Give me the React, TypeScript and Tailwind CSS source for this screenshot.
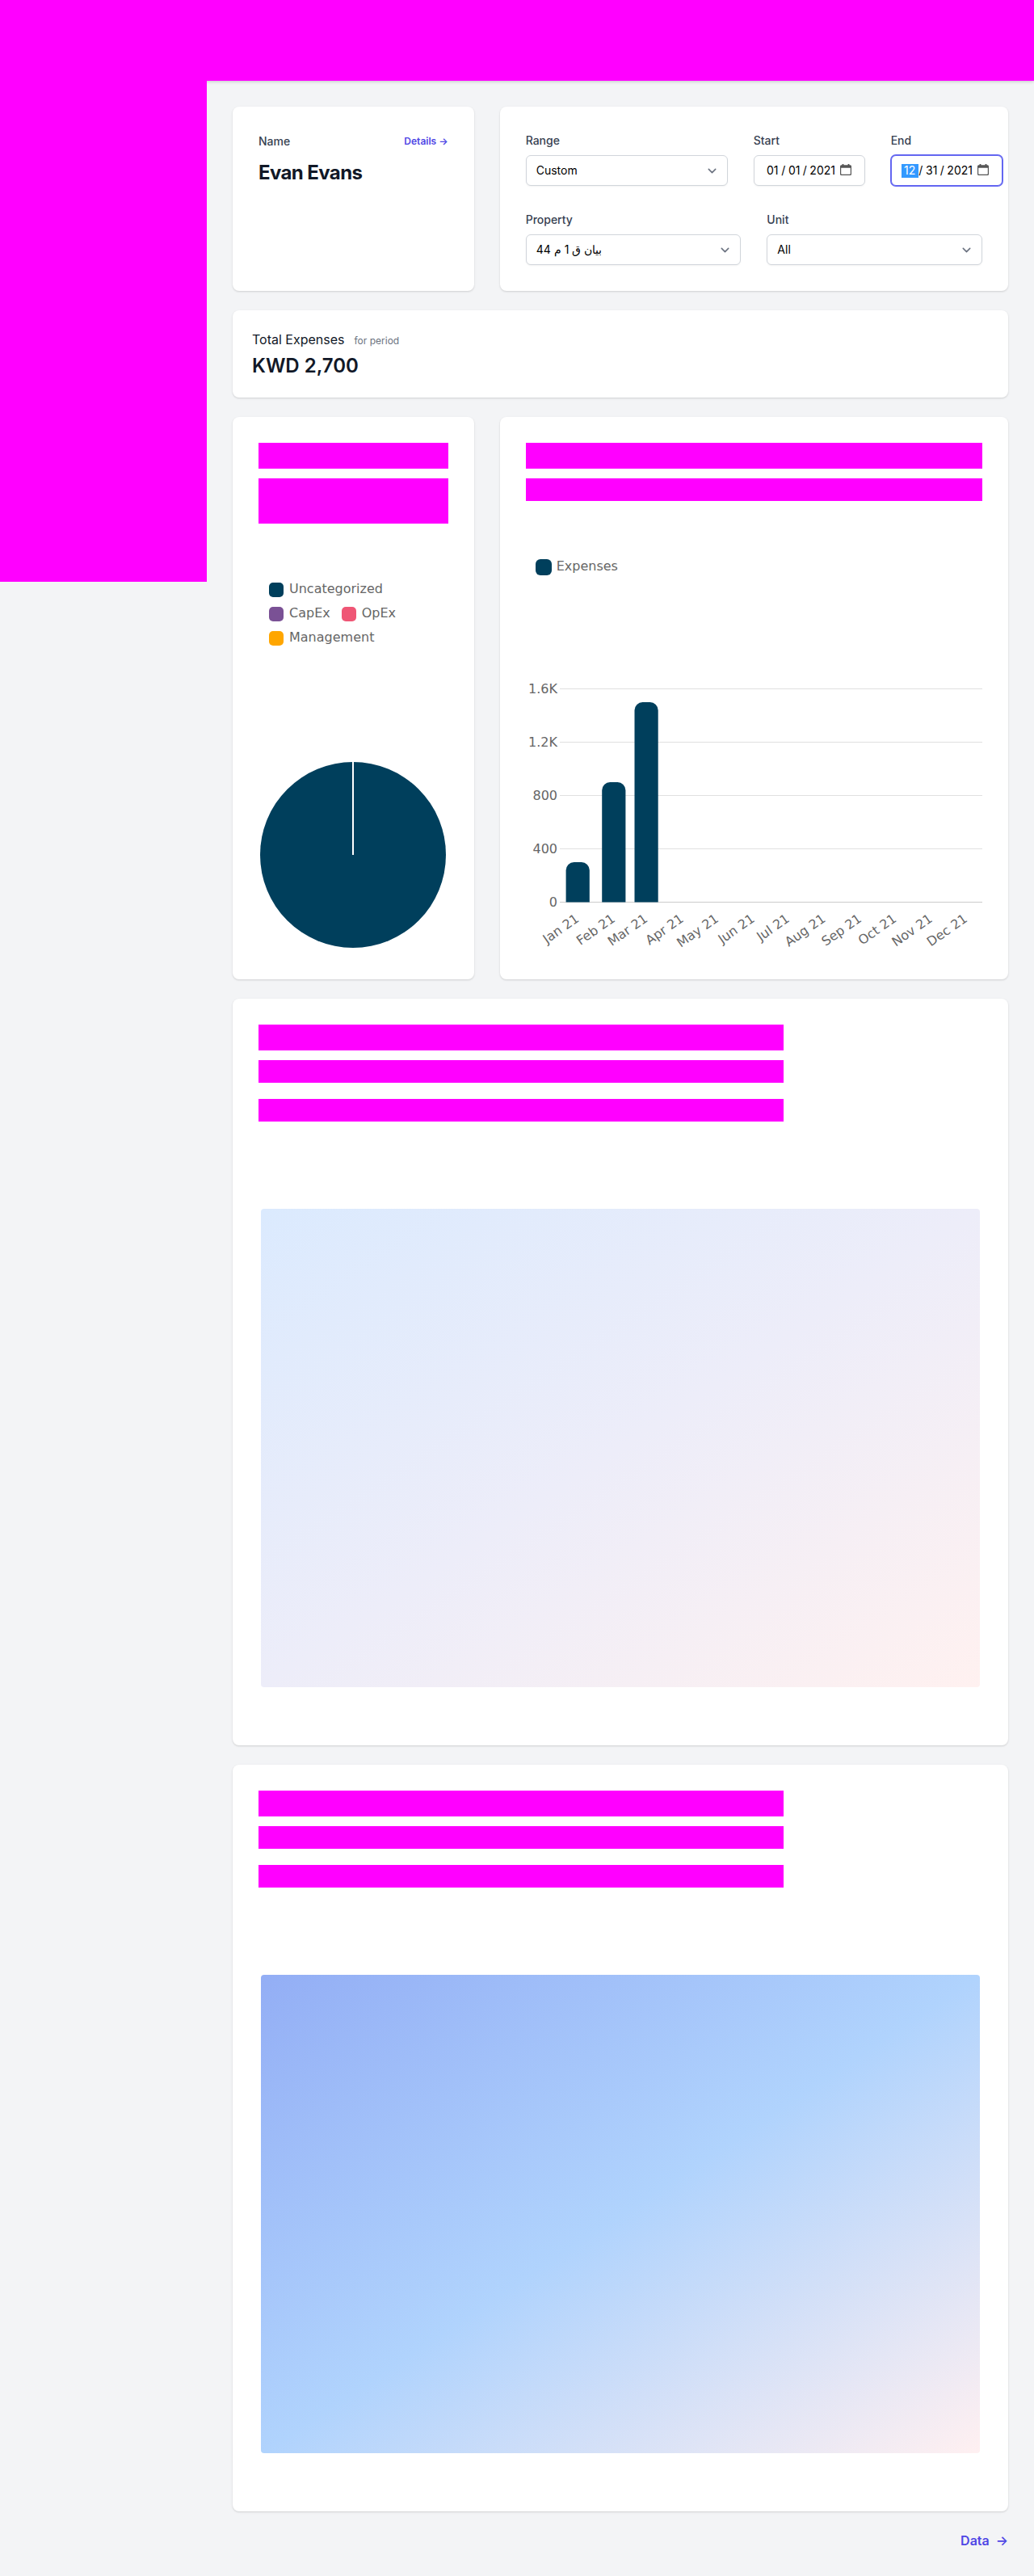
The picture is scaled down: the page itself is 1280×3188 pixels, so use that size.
import React from "react";

const INTER = "font-['Inter',sans-serif]";
const CARD = "rounded-lg bg-white shadow-[0_1px_3px_0_rgba(0,0,0,0.1),0_1px_2px_0_rgba(0,0,0,0.06)]";
const FIELD = "mt-2 flex h-[38px] w-full items-center rounded-md border bg-white pl-3 text-sm leading-5 text-black";
const IDLE = "border-[#d1d5db] shadow-[0_1px_2px_0_rgba(0,0,0,0.05)]";
const FOCUSED = "border-[#6366f1] shadow-[0_0_0_1px_#6366f1]";

function Select({ label, value }: { label: string; value: string }) {
  return (
    <div>
      <div className="text-sm leading-5 font-medium text-[#374151]">{label}</div>
      <button type="button" className={`${FIELD} ${IDLE} justify-between pr-2`}>
        <span>{value}</span>
        <svg width="21" height="21" viewBox="0 0 20 20" fill="none">
          <path d="M6 8l4 4 4-4" stroke="#6b7280" strokeWidth="1.5" strokeLinecap="round" strokeLinejoin="round" />
        </svg>
      </button>
    </div>
  );
}

function DateField({ label, parts, focus }: { label: string; parts: [string, string, string]; focus?: boolean }) {
  return (
    <div>
      <div className="text-sm leading-5 font-medium text-[#374151]">{label}</div>
      <div className={`${FIELD} ${focus ? FOCUSED : IDLE}`}>
        <span className={`mt-px h-[17px] w-[21px] shrink-0 text-center leading-[16px] ${focus ? "bg-[#3399ff] text-white" : ""}`}>
          {parts[0]}
        </span>
        <span className="w-[6px] shrink-0 text-center">/</span>
        <span className="w-[21px] shrink-0 text-center">{parts[1]}</span>
        <span className="w-[5px] shrink-0 text-center">/</span>
        <span className="w-[39px] shrink-0 text-center">{parts[2]}</span>
        <svg width="14" height="14" viewBox="0 0 14 14" className="-mt-[2px] ml-[2px] shrink-0" fill="#555">
          <path d="M2.6 0h1.8v1.2h5.2V0h1.8v1.2h1.1A1.5 1.5 0 0 1 14 2.7v9.8a1.5 1.5 0 0 1-1.5 1.5h-11A1.5 1.5 0 0 1 0 12.5V2.7A1.5 1.5 0 0 1 1.5 1.2h1.1zM1.2 4.7v7.4a.7.7 0 0 0 .7.7h10.2a.7.7 0 0 0 .7-.7V4.7z" fillRule="evenodd" />
        </svg>
      </div>
    </div>
  );
}

function Legend({ color, label }: { color: string; label: string }) {
  return (
    <div className="flex h-[21px] items-center gap-[7px]">
      <span className="size-[18px] rounded-[5px]" style={{ background: color }} />
      <span className="-mt-[3px] text-[16px] leading-[21px] text-[#666]">{label}</span>
    </div>
  );
}

const MONTHS: [string, number, number][] = [
  ["Jan 21", 0, 300],
  ["Feb 21", 31, 900],
  ["Mar 21", 59, 1500],
  ["Apr 21", 90, 0],
  ["May 21", 120, 0],
  ["Jun 21", 151, 0],
  ["Jul 21", 181, 0],
  ["Aug 21", 212, 0],
  ["Sep 21", 243, 0],
  ["Oct 21", 273, 0],
  ["Nov 21", 304, 0],
  ["Dec 21", 334, 0],
];

function BarChart() {
  const base = 276.5;
  return (
    <svg width="565" height="340" viewBox="0 0 565 340" className="block font-['DejaVu_Sans',sans-serif] text-[16px]">
      {["0", "400", "800", "1.2K", "1.6K"].map((t, i) => (
        <g key={t}>
          <line x1="42" x2="565" y1={base - i * 66} y2={base - i * 66} stroke={i ? "#e0e0e0" : "#ccc"} />
          <text x="39" y={base - i * 66 + 5} textAnchor="end" fill="#666">{t}</text>
        </g>
      ))}
      {MONTHS.map(([name, day, value]) => {
        const x = 64.2 + day * 1.439;
        const top = base - value * 0.165;
        return (
          <g key={name}>
            {value > 0 && (
              <path
                d={`M${x - 14.6} ${base}V${top + 10}a10 10 0 0 1 10-10h9.2a10 10 0 0 1 10 10V${base}z`}
                fill="#003f5c"
              />
            )}
            <text transform={`translate(${x - 0.7} ${base + 18}) rotate(-35)`} y="6" textAnchor="end" fill="#666">{name}</text>
          </g>
        );
      })}
    </svg>
  );
}

function MapCard({ gradient }: { gradient: string }) {
  return (
    <section className={`${CARD} h-[924px] p-8`}>
      <div className="h-8 w-[650px] bg-[#ff00ff]" />
      <div className="mt-3 h-7 w-[650px] bg-[#ff00ff]" />
      <div className="mt-5 h-7 w-[650px] bg-[#ff00ff]" />
      <div className={`mt-[108px] mr-[3px] ml-[3px] h-[592px] rounded ${gradient}`} />
    </section>
  );
}

export default function App() {
  return (
    <div className={`h-[3188px] w-[1280px] bg-[#f3f4f6] ${INTER}`}>
      <header className="h-[100px] bg-[#ff00ff] shadow-[0_1px_4px_rgba(0,0,0,0.2)]" />
      <div className="flex items-start">
        <aside className="relative h-[620px] w-64 shrink-0 bg-[#ff00ff]" />
        <main className="flex w-[1024px] flex-col gap-6 px-8 pt-8">
          <div className="grid grid-cols-3 gap-8">
            <section className={`${CARD} px-8 pt-[31px]`}>
              <div className="flex items-center justify-between text-[#374151]">
                <span className="text-sm leading-6 font-medium">Name</span>
                <a className="text-xs font-semibold text-[#4f46e5]">Details →</a>
              </div>
              <h1 className="mt-[9px] text-2xl leading-9 font-bold tracking-tight text-[#111827]">Evan Evans</h1>
            </section>
            <section className={`${CARD} col-span-2 flex h-[228px] flex-col gap-8 p-8`}>
              <div className="grid w-[590px] grid-cols-[250px_138px_138px] gap-x-8">
                <Select label="Range" value="Custom" />
                <DateField label="Start" parts={["01", "01", "2021"]} />
                <DateField label="End" parts={["12", "31", "2021"]} focus />
              </div>
              <div className="grid grid-cols-2 gap-8">
                <Select label="Property" value="44 بيان ق 1 م" />
                <Select label="Unit" value="All" />
              </div>
            </section>
          </div>

          <section className={`${CARD} h-[108px] px-6 pt-6`}>
            <div className="flex items-baseline text-[#111827]">
              <span className="text-base">Total Expenses</span>
              <span className="ml-3 text-xs text-[#6b7280]">for period</span>
            </div>
            <div className="mt-[5px] text-2xl leading-8 font-semibold text-[#111827]">KWD 2,700</div>
          </section>

          <div className="grid h-[696px] grid-cols-3 gap-8">
            <section className={`${CARD} px-8 pt-8`}>
              <div className="h-8 bg-[#ff00ff]" />
              <div className="mt-3 h-14 bg-[#ff00ff]" />
              <div className="mt-[71.5px] ml-[13px] flex flex-col gap-[9px] font-['DejaVu_Sans',sans-serif]">
                <Legend color="#003f5c" label="Uncategorized" />
                <div className="flex gap-[14px]">
                  <Legend color="#7a5195" label="CapEx" />
                  <Legend color="#ef5675" label="OpEx" />
                </div>
                <Legend color="#ffa600" label="Management" />
              </div>
              <svg width="230" height="230" viewBox="0 0 230 230" className="mt-[142.5px] ml-0.5 block">
                <circle cx="115" cy="115" r="115" fill="#003f5c" />
                <rect x="114" y="0" width="2" height="115" fill="#fff" />
              </svg>
            </section>
            <section className={`${CARD} col-span-2 px-8 pt-8`}>
              <div className="h-8 bg-[#ff00ff]" />
              <div className="mt-3 h-7 bg-[#ff00ff]" />
              <div className="mt-[72px] ml-3 flex h-5 items-center gap-[6px] font-['DejaVu_Sans',sans-serif]">
                <span className="size-5 rounded-[6px] bg-[#003f5c]" />
                <span className="-mt-[3px] text-[16px] leading-5 text-[#666]">Expenses</span>
              </div>
              <div className="mt-[128px]">
                <BarChart />
              </div>
            </section>
          </div>

          <MapCard gradient="bg-[linear-gradient(to_bottom_right,#dbeafe,#ededf9,#fff1f0)]" />
          <MapCard gradient="bg-[linear-gradient(to_bottom_right,#93aef5,#b0d3fd,#fff0f1)]" />

          <div className="flex justify-end text-base leading-6 font-semibold text-[#4f46e5]">
            <a className="flex gap-2">
              <span>Data</span>
              <span>→</span>
            </a>
          </div>
        </main>
      </div>
    </div>
  );
}
